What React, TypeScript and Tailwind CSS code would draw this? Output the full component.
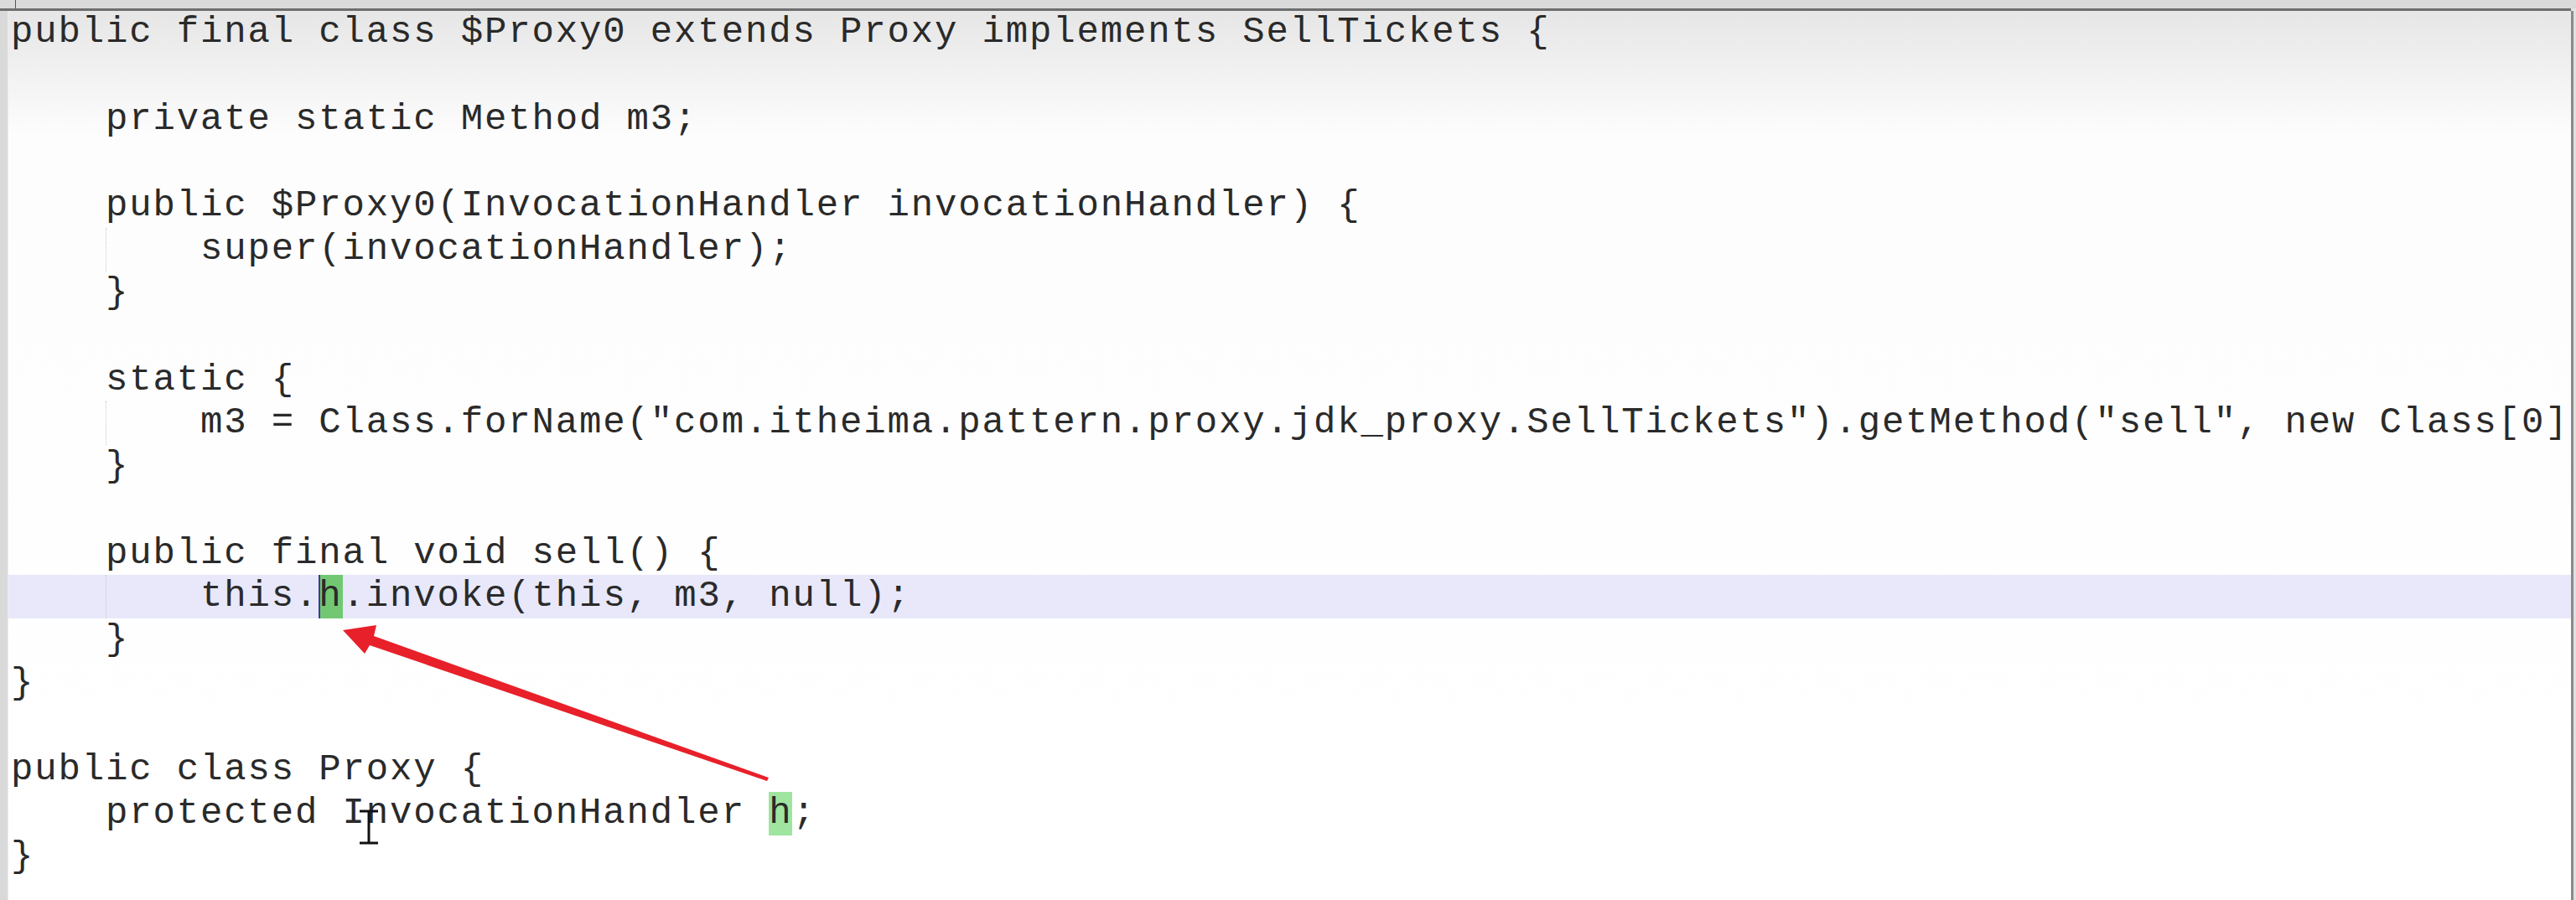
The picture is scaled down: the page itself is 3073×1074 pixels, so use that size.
import React from "react";

type Seg = { t: string; hl?: "a" | "b"; caret?: boolean };
type Line = { segs: Seg[]; guide?: boolean; active?: boolean };

const L = (t: string, extra: Partial<Line> = {}): Line => ({ segs: [{ t }], ...extra });

const lines: Line[] = [
  L("public final class $Proxy0 extends Proxy implements SellTickets {"),
  L(""),
  L("    private static Method m3;"),
  L(""),
  L("    public $Proxy0(InvocationHandler invocationHandler) {"),
  L("        super(invocationHandler);", { guide: true }),
  L("    }"),
  L(""),
  L("    static {"),
  L('        m3 = Class.forName("com.itheima.pattern.proxy.jdk_proxy.SellTickets").getMethod("sell", new Class[0]', { guide: true }),
  L("    }"),
  L(""),
  L("    public final void sell() {"),
  {
    segs: [{ t: "        this." }, { t: "h", hl: "a", caret: true }, { t: ".invoke(this, m3, null);" }],
    guide: true,
    active: true,
  },
  L("    }"),
  L("}"),
  L(""),
  L("public class Proxy {"),
  {
    segs: [{ t: "    protected InvocationHandler " }, { t: "h", hl: "b" }, { t: ";" }],
  },
  L("}"),
];

export default function App() {
  return (
    <div className="relative w-[3073px] h-[1074px] overflow-hidden bg-[#e4e4e4] flex flex-col">
      {/* top bar */}
      <div className="relative h-[10px] bg-[#dadada] shrink-0">
        <div className="absolute left-[18px] top-0 w-[1px] h-[10px] bg-[#555]" />
      </div>
      <div className="h-[3px] bg-[#6e6e6e] shrink-0 mr-[6px]" />
      <div className="flex flex-1 min-h-0">
        {/* left gutter */}
        <div className="w-[10px] bg-[#d9d9d9] shrink-0 border-r border-[#ececec]" />
        {/* editor */}
        <div
          className="flex-1 min-w-0 bg-gradient-to-b from-[#e6e6e6] via-[#fdfdfd] via-[14%] to-white pt-[0.4px]"
          style={{ fontFamily: '"Liberation Mono", "Courier New", monospace' }}
        >
          {lines.map((ln, i) => (
            <div
              key={i}
              className={
                "relative h-[51.78px] leading-[51.78px] pl-[3px] whitespace-pre text-[44px] tracking-[1.85px] text-[#2a2a2a] " +
                (ln.active ? "bg-[#e8e8fa]" : "")
              }
            >
              {ln.guide && (
                <div className="absolute left-[116px] top-0 h-full border-l border-dotted border-[#c8c8c8]" />
              )}
              {ln.segs.map((s, j) =>
                s.hl ? (
                  <span
                    key={j}
                    className={
                      "relative inline-block h-[51.78px] " +
                      (s.hl === "a" ? "bg-[#72c872]" : "bg-[#9fe59f] h-[46px]")
                    }
                  >
                    {s.caret && (
                      <span className="absolute left-0 top-0 w-[2px] h-full bg-[#3a3aa0]" />
                    )}
                    {s.t}
                  </span>
                ) : (
                  <span key={j}>{s.t}</span>
                )
              )}
            </div>
          ))}
        </div>
        {/* right border */}
        <div className="w-[6px] shrink-0 flex">
          <div className="w-[3px] bg-[#8a8a8a]" />
          <div className="w-[3px] bg-[#e0e0e0]" />
        </div>
      </div>

      {/* annotation overlay: red arrow and text cursor */}
      <svg
        className="absolute inset-0 pointer-events-none"
        width="3073"
        height="1074"
        viewBox="0 0 3073 1074"
      >
        <polygon
          fill="#e8202a"
          points="409,752 449,746 446,759 917,928 915,932 441,770 435,780"
        />
        <g stroke="#111" strokeWidth="3" fill="none">
          <line x1="440" y1="968" x2="440" y2="1007" />
          <line x1="429" y1="1006" x2="451" y2="1006" />
          <line x1="429" y1="968" x2="451" y2="968" />
        </g>
      </svg>
    </div>
  );
}
